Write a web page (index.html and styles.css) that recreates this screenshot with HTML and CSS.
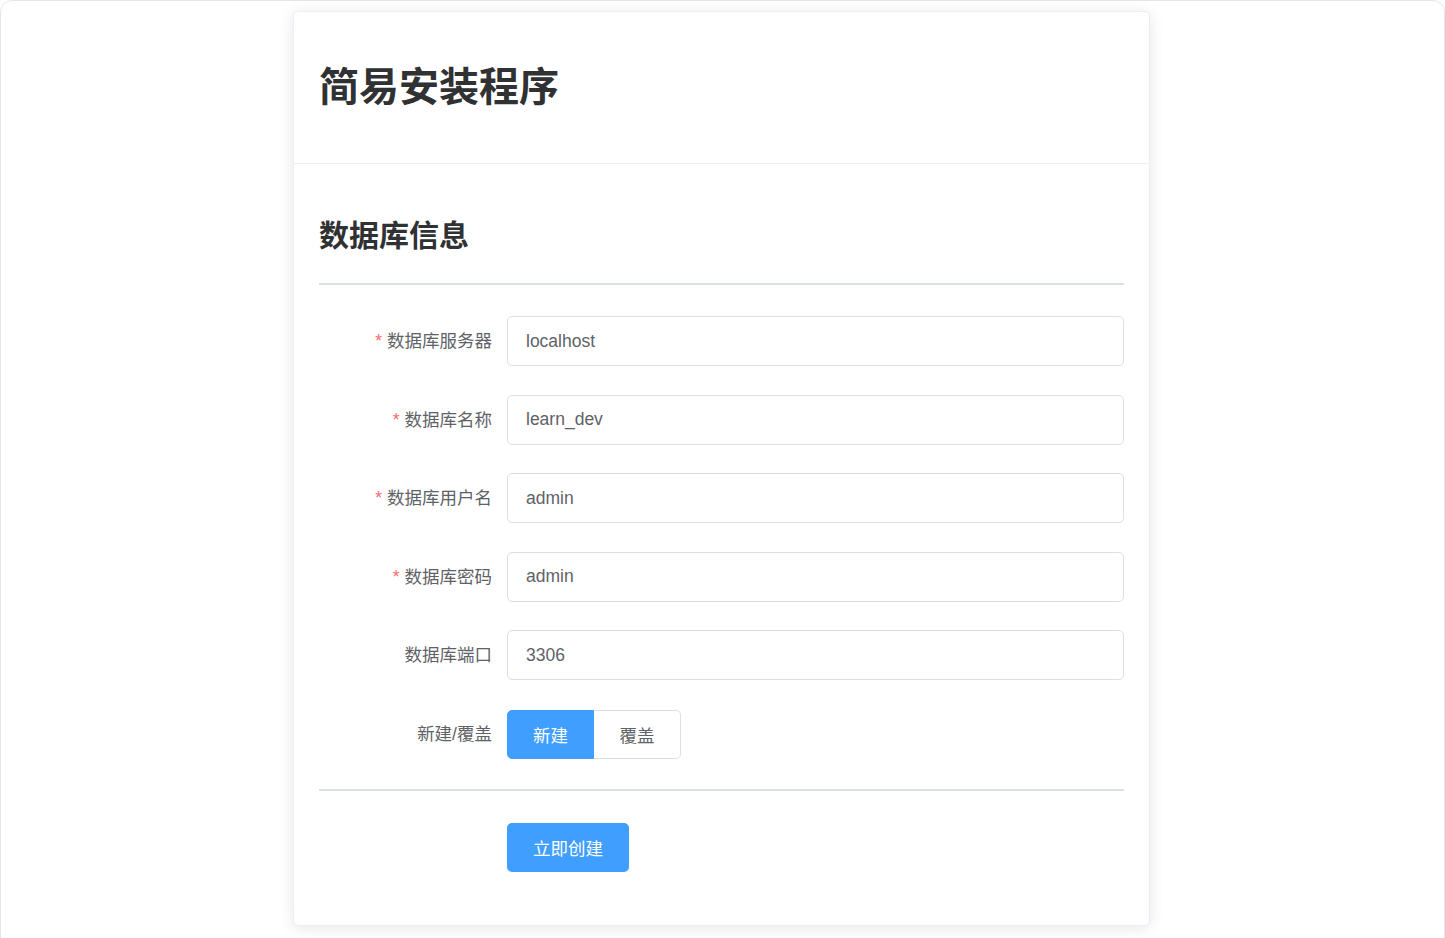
FILE: index.html
```html
<!DOCTYPE html>
<html lang="zh-CN">
<head>
  <meta charset="UTF-8" />
  <meta name="viewport" content="width=device-width, initial-scale=1" />
  <title>简易安装程序</title>
  <link rel="stylesheet" href="styles.css">
</head>
<body>
  <div class="frame">
    <div class="card">
      <!-- Header -->
      <div class="card-header">
        <h1>简易安装程序</h1>
      </div>

      <!-- Body -->
      <div class="card-body">
        <h2>数据库信息</h2>
        <div class="divider"></div>

        <form class="install-form">
          <div class="form-item">
            <label class="form-label required">数据库服务器</label>
            <div class="form-content"><input type="text" value="localhost" /></div>
          </div>
          <div class="form-item">
            <label class="form-label required">数据库名称</label>
            <div class="form-content"><input type="text" value="learn_dev" /></div>
          </div>
          <div class="form-item">
            <label class="form-label required">数据库用户名</label>
            <div class="form-content"><input type="text" value="admin" /></div>
          </div>
          <div class="form-item">
            <label class="form-label required">数据库密码</label>
            <div class="form-content"><input type="text" value="admin" /></div>
          </div>
          <div class="form-item">
            <label class="form-label">数据库端口</label>
            <div class="form-content"><input type="text" value="3306" /></div>
          </div>
          <div class="form-item">
            <label class="form-label">新建/覆盖</label>
            <div class="form-content">
              <div class="radio-group">
                <button type="button" class="radio-btn active">新建</button>
                <button type="button" class="radio-btn">覆盖</button>
              </div>
            </div>
          </div>

          <div class="divider divider-bottom"></div>

          <div class="form-item form-item-last">
            <div class="form-label"></div>
            <div class="form-content">
              <button type="submit" class="submit-btn">立即创建</button>
            </div>
          </div>
        </form>
      </div>
    </div>
  </div>
</body>
</html>
```

FILE: styles.css
```css
/* Base */
html, body {
  margin: 0;
  padding: 0;
  height: 100%;
  overflow: hidden;
}
body {
  font-family: "Liberation Sans", "Noto Sans CJK SC", sans-serif;
  background: #fff;
  color: #303133;
}
/* Outer window frame */
.frame {
  box-sizing: border-box;
  width: 1445px;
  height: 960px;
  border: 1px solid #e6e6e6;
  border-radius: 12px;
  padding-top: 10px;
}
/* Card */
.card {
  box-sizing: border-box;
  width: 857px;
  margin: 0 0 0 292px;
  background: #fff;
  border: 1px solid #ebeef5;
  border-radius: 5px;
  box-shadow: 0 2px 15px rgba(0,0,0,0.1);
}
.card-header {
  padding: 22px 25px;
  border-bottom: 1px solid #ebeef5;
}
.card-header h1 {
  margin: 27px 0 28px;
  font-size: 40px;
  line-height: 52px;
  font-weight: 700;
  color: #303133;
}
.card-body {
  padding: 25px;
}
.card-body h2 {
  margin: 25px 0 0;
  font-size: 30px;
  line-height: 44px;
  font-weight: 700;
  color: #303133;
}
.divider {
  height: 2px;
  background: #dcdfe6;
  margin: 25px 0 31px;
}
.divider-bottom {
  margin: 30.5px 0 32px;
}
/* Form */
.form-item {
  display: flex;
  margin-bottom: 28.5px;
}
.form-item-last {
  margin-bottom: 28px;
}
.form-label {
  box-sizing: border-box;
  flex: 0 0 188px;
  padding-right: 15px;
  text-align: right;
  font-size: 17.5px;
  line-height: 50px;
  color: #606266;
}
.form-label.required::before {
  content: "*";
  color: #f56c6c;
  margin-right: 5px;
}
.form-content {
  flex: 1;
}
input {
  box-sizing: border-box;
  width: 100%;
  height: 50px;
  padding: 0 18px;
  border: 1px solid #dcdfe6;
  border-radius: 5px;
  font-family: inherit;
  font-size: 17.5px;
  color: #606266;
  outline: none;
}
.radio-group {
  display: flex;
  padding-top: 1px;
}
.radio-btn {
  box-sizing: border-box;
  width: 87px;
  height: 49px;
  margin: 0;
  border: 1px solid #dcdfe6;
  background: #fff;
  font-family: inherit;
  font-size: 17.5px;
  color: #606266;
  cursor: pointer;
}
.radio-btn:first-child {
  border-radius: 5px 0 0 5px;
}
.radio-btn:last-child {
  border-left: none;
  border-radius: 0 5px 5px 0;
}
.radio-btn.active {
  background: #409eff;
  border-color: #409eff;
  color: #fff;
}
.submit-btn {
  box-sizing: border-box;
  width: 122px;
  height: 49px;
  border: none;
  border-radius: 5px;
  background: #409eff;
  color: #fff;
  font-family: inherit;
  font-size: 17.5px;
  cursor: pointer;
}
```
